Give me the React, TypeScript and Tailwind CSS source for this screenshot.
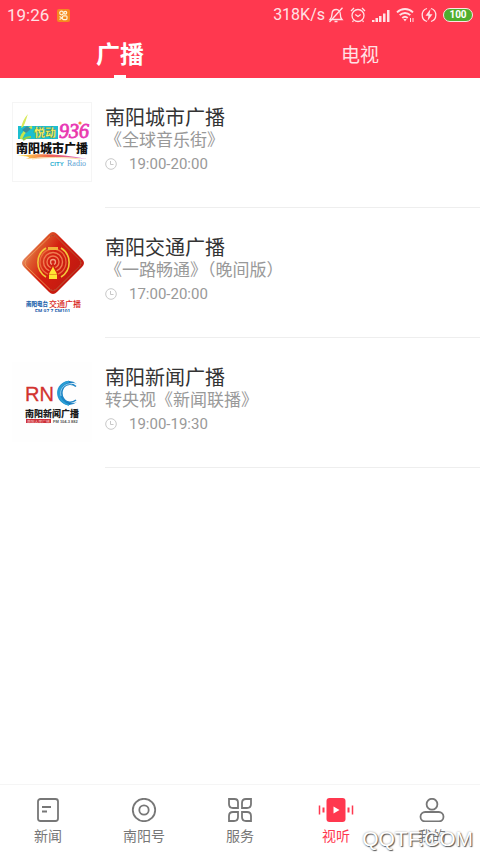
import React from "react";

interface Station {
  name: string;
  show: string;
  time: string;
  logo: React.ReactNode;
}

interface NavItem {
  label: string;
  icon: React.ReactNode;
  active?: boolean;
}

const CityLogo: React.FC = () => (
  <svg viewBox="0 0 80 80" className="w-20 h-20" aria-hidden="true">
    <defs>
      <linearGradient id="swoosh" x1="0" x2="1">
        <stop offset="0" stopColor="#fff04a" />
        <stop offset="0.45" stopColor="#f0624a" />
        <stop offset="1" stopColor="#d05bd8" />
      </linearGradient>
      <linearGradient id="nums" x1="0" y1="0" x2="1" y2="1">
        <stop offset="0" stopColor="#e02fd0" />
        <stop offset="0.6" stopColor="#f0407a" />
        <stop offset="1" stopColor="#e33fe0" />
      </linearGradient>
    </defs>
    <rect x="0.5" y="0.5" width="79" height="79" fill="#fff" stroke="#f5f5f5" />
    <rect x="6" y="24" width="40" height="13" fill="#1cbfd0" />
    <path d="M9 37C11 32 12 30 14 28M9 36C11 31 15 27 20 25" fill="none" stroke="#c8e64a" strokeWidth="2.5" />
    <path d="M9 26C10 21 12 16 16 12C14 17 14 20 11 25Z" fill="#d8ea5a" />
    <path d="M10 28L15 24L19 27L14 31Z" fill="#3a8f9c" />
    <path d="M11 38C14 35 16 35 19 35" fill="none" stroke="#8fd04a" strokeWidth="2" />
    <text x="22" y="35" fontSize="11" fontWeight="900" fill="#fff35c" stroke="#3b7c55" strokeWidth="0.3" fontFamily="'Noto Sans CJK SC', sans-serif">悦动</text>
    <text x="47" y="36" fontSize="20" fontWeight="400" fontStyle="italic" fill="url(#nums)" stroke="#e838b8" strokeWidth="0.8" fontFamily="'Liberation Serif', serif">936</text>
    <circle cx="68" cy="21" r="1.6" fill="#f7923c" />
    <text x="4" y="51" fontSize="12" fontWeight="900" fill="#111" fontFamily="'Noto Sans CJK SC', sans-serif">南阳城市广播</text>
    <path d="M5 54C25 51 52 52 75 57C50 54 30 55 13 57C22 55 14 54 5 54Z" fill="url(#swoosh)" />
    <path d="M20 57C35 55 52 55 68 57" fill="none" stroke="#f7d08c" strokeWidth="0.8" />
    <text x="38" y="64" fontSize="6" fontWeight="700" fill="#2aaed0" fontFamily="'Liberation Sans', sans-serif">CITY</text>
    <text x="55" y="64" fontSize="8" fill="#5ea2d4" fontFamily="'Liberation Serif', serif">Radio</text>
  </svg>
);

const TrafficLogo: React.FC = () => (
  <svg viewBox="0 0 80 80" className="w-20 h-20" aria-hidden="true">
    <defs>
      <linearGradient id="diamond" x1="0" y1="0" x2="0.9" y2="0.5">
        <stop offset="0" stopColor="#f4d0b4" />
        <stop offset="0.35" stopColor="#dd5a2c" />
        <stop offset="0.6" stopColor="#d41f10" />
        <stop offset="1" stopColor="#c41a10" />
      </linearGradient>
    </defs>
    <path d="M37 2Q41 -2 45 2L70 27Q74 31 70 35L45 60Q41 64 37 60L12 35Q8 31 12 27Z" fill="url(#diamond)" />
    <path d="M38 4.500Q41 2 44 4.500L68 28Q70 31 68 34L44 57.500Q41 60 38 57.500L14 34Q12 31 14 28Z" fill="none" stroke="#f0a05a" strokeWidth="0.8" />
    <path d="M38 4.500Q41 2 44 4.500L68 28Q70 31 68 34L44 57.500Q41 60 38 57.500" fill="none" stroke="#8c1410" strokeWidth="0.6" />
    <g fill="none">
      <path d="M34 45A17 17 0 0 1 34 16M49 16A17 17 0 0 1 49 45" stroke="#f2c83a" strokeWidth="1.6" />
      <circle cx="41" cy="30" r="13" stroke="#ec6a3c" strokeWidth="1.3" />
      <circle cx="41" cy="30" r="9.500" stroke="#f07c50" strokeWidth="1.4" />
      <circle cx="41" cy="30" r="6" stroke="#f07c50" strokeWidth="1.4" />
      <circle cx="41" cy="30" r="2.500" stroke="#f2a080" strokeWidth="1.3" />
    </g>
    <rect x="36" y="15" width="10" height="3" fill="#f2b03a" />
    <path d="M34 47L41 30L48 47Z" fill="#cf2212" />
    <path d="M41 34C42 38 45 40 45 43V47H37V43C37 40 40 38 41 34Z" fill="#ffe633" />
    <path d="M37 42.500H45" stroke="#e58a20" strokeWidth="0.8" />
    <text x="14" y="74" fontSize="5.500" fontWeight="900" fill="#1c62ac" fontFamily="'Noto Sans CJK SC', sans-serif">南阳电台</text>
    <text x="37" y="75" fontSize="8" fontWeight="500" fill="#d8281c" fontFamily="'Noto Sans CJK SC', sans-serif">交通广播</text>
    <text x="23" y="81" fontSize="5" fontWeight="700" fill="#1c62ac" fontFamily="'Liberation Sans', sans-serif">FM 97.7 FM101</text>
  </svg>
);

const NewsLogo: React.FC = () => (
  <svg viewBox="0 0 80 80" className="w-20 h-20" aria-hidden="true">
    <defs>
      <linearGradient id="crescent" x1="0" x2="1">
        <stop offset="0" stopColor="#2a9fd6" />
        <stop offset="0.6" stopColor="#1373b8" />
        <stop offset="1" stopColor="#4aa8dc" />
      </linearGradient>
    </defs>
    <rect width="80" height="80" fill="#fefefe" />
    <text x="13" y="39" fontSize="20" fill="#d2322e" stroke="#d2322e" strokeWidth="0.3" fontFamily="'Liberation Sans', sans-serif">RN</text>
    <path d="M65 22A12 12 0 1 0 65 40A10 10 0 1 1 65 22Z" fill="url(#crescent)" />
    <path d="M57 19.500A12 12 0 0 0 57 43" fill="none" stroke="#2a9fd6" strokeWidth="2" />
    <path d="M64 24.500A9 9 0 1 0 64 38" fill="none" stroke="#1d84c6" strokeWidth="1.6" />
    <path d="M60 22A9.500 9.500 0 0 0 49 34" fill="none" stroke="#c8e8f6" strokeWidth="0.7" />
    <text x="13" y="55" fontSize="9" fontWeight="900" fill="#1c1c1c" fontFamily="'Noto Sans CJK SC', sans-serif">南阳新闻广播</text>
    <rect x="14" y="57" width="25" height="4" fill="#cc2f38" />
    <text x="15" y="60.500" fontSize="3.800" fill="#f6c4c4" fontFamily="'Noto Sans CJK SC', sans-serif">南阳人民广播</text>
    <text x="41" y="61" fontSize="4" fontWeight="700" fill="#555" fontFamily="'Liberation Sans', sans-serif">FM 104.3 882</text>
  </svg>
);

const stations: Station[] = [
  { name: "南阳城市广播", show: "《全球音乐街》", time: "19:00-20:00", logo: <CityLogo /> },
  { name: "南阳交通广播", show: "《一路畅通》（晚间版）", time: "17:00-20:00", logo: <TrafficLogo /> },
  { name: "南阳新闻广播", show: "转央视《新闻联播》", time: "19:00-19:30", logo: <NewsLogo /> },
];

const navItems: NavItem[] = [
  {
    label: "新闻",
    icon: (
      <>
        <rect x="8" y="1" width="20" height="22" rx="2.500" />
        <path d="M12 9H21M12 13.500H17" />
      </>
    ),
  },
  {
    label: "南阳号",
    icon: (
      <>
        <circle cx="18" cy="12" r="11.200" />
        <circle cx="18" cy="12" r="4.700" />
      </>
    ),
  },
  {
    label: "服务",
    icon: (
      <>
        <path d="M7 1H12.500Q16 1 16 4.500V10H11Q7 10 7 6Z" />
        <path d="M29 1H24Q20 1 20 5V10H25Q29 10 29 6Z" />
        <path d="M16 14H11Q7 14 7 18V23H12Q16 23 16 19Z" />
        <path d="M20 14H25Q29 14 29 18V23H24Q20 23 20 19Z" />
      </>
    ),
  },
  {
    label: "视听",
    active: true,
    icon: (
      <>
        <rect x="8.500" y="0" width="19" height="24" rx="3" fill="currentColor" stroke="none" />
        <path d="M15.500 8.500V15.500L21.500 12Z" fill="#fff" stroke="none" />
        <path d="M1.500 7.500V16.500M34.500 7.500V16.500" strokeWidth="1.500" />
        <path d="M5.500 9.500V14.500M30.500 9.500V14.500" strokeWidth="2" />
      </>
    ),
  },
  {
    label: "我的",
    icon: (
      <>
        <circle cx="18" cy="6.200" r="5.400" />
        <rect x="6.500" y="14" width="23" height="9.500" rx="4.700" />
      </>
    ),
  },
];

const StatusBar: React.FC = () => (
  <div className="flex items-center justify-between h-[30px] px-[7px] text-[#ffe1e5] font-['Roboto',sans-serif]">
    <div className="flex items-center gap-2">
      <span className="text-[17px] leading-5">19:26</span>
      <svg viewBox="0 0 13 13" className="w-[13px] h-[13px]" aria-hidden="true">
        <rect width="13" height="13" rx="2" fill="#f58a1f" />
        <g fill="none" stroke="#fff3d8" strokeWidth="1.200">
          <circle cx="4.500" cy="4" r="1.800" />
          <circle cx="8.300" cy="3.700" r="1.400" />
          <rect x="5.500" y="6.800" width="4.500" height="3.800" rx="1" />
          <path d="M2.500 7.500L5 9L2.500 10.500" />
        </g>
      </svg>
    </div>
    <div className="flex items-center gap-[6px]">
      <div className="flex items-center gap-[3px]">
        <span className="text-[16px] leading-5">318K/s</span>
        <svg viewBox="0 0 16 16" className="w-4 h-4" fill="none" stroke="currentColor" strokeWidth="1.300" aria-hidden="true">
          <path d="M2 12.500H14C12.500 11 12.300 9.500 12.300 7C12.300 4.500 10.500 2.500 8.300 2.500C5.500 2.500 4 4.500 4 7C4 9.500 3.500 11 2 12.500Z" />
          <path d="M6.500 14.500H9.500M14.500 0.800L1.500 15" />
        </svg>
      </div>
      <svg viewBox="0 0 16 16" className="w-4 h-4" fill="none" stroke="currentColor" strokeWidth="1.300" aria-hidden="true">
        <circle cx="8" cy="8.500" r="6" />
        <path d="M5.300 7.500L8 9.500L10.700 7.500M1 4L4 1M15 4L12 1M3.500 13.500L2.500 15M12.500 13.500L13.500 15" />
      </svg>
      <svg viewBox="0 0 18 13" className="w-[18px] h-[13px]" fill="currentColor" aria-hidden="true">
        <path d="M0 11H2.500V13H0ZM3.500 9H6V13H3.500ZM7 7H9.500V13H7ZM11 4.500H13.500V13H11ZM15 1H17.500V13H15Z" />
      </svg>
      <svg viewBox="0 0 19 16" className="w-[19px] h-4" fill="none" stroke="currentColor" strokeWidth="1.900" aria-hidden="true">
        <path d="M1 5.300C5.500 0.800 12.500 0.800 17 5.300M3.700 8.200C6.700 5.200 11.300 5.200 14.300 8.200M6.300 11C8 9.300 10 9.300 11.700 11" />
        <path d="M7.300 12H10.700L9 14.500Z" fill="currentColor" stroke="none" />
        <path d="M14.500 11V15M17 11V15" strokeWidth="1" />
      </svg>
      <svg viewBox="0 0 16 16" className="w-4 h-4" fill="none" stroke="currentColor" strokeWidth="1.300" aria-hidden="true">
        <path d="M6 1.500A6.800 6.800 0 0 0 6 14.500M10 1.500A6.800 6.800 0 0 1 10 14.500" />
        <path d="M9.500 2L4.500 8.800H7.500L6.500 14L11.500 7.200H8.500Z" fill="currentColor" stroke="none" />
      </svg>
      <span className="flex items-center justify-center w-[30px] h-[14px] rounded-full border border-[#ffe1e5] bg-[#4fae2e] text-white text-[10px] leading-3 font-bold">
        100
      </span>
    </div>
  </div>
);

const StationRow: React.FC<{ station: Station }> = ({ station }) => (
  <li className="flex gap-[13px] pl-3 h-[130px]">
    <div className="shrink-0 pt-6">{station.logo}</div>
    <div className="flex-1 border-b border-[#eee] pt-7">
      <h2 className="text-[20px] leading-[22px] text-[#333]">{station.name}</h2>
      <p className="text-[17px] leading-[22px] text-[#999]">{station.show}</p>
      <p className="flex items-center gap-3 mt-[3px] text-[15px] leading-[22px] text-[#999]">
        <svg viewBox="0 0 12 12" className="w-3 h-3" fill="none" stroke="#c8c8c8" aria-hidden="true">
          <circle cx="6" cy="6" r="5.300" />
          <path d="M5.500 3V6.500H8.500" />
        </svg>
        <span className="font-['Roboto',sans-serif]">{station.time}</span>
      </p>
    </div>
  </li>
);

const App: React.FC = () => {
  return (
    <div className="relative flex flex-col min-h-screen bg-white font-['Noto_Sans_CJK_SC',sans-serif]">
      <header className="bg-[#ff384f]">
        <StatusBar />
        <div className="flex h-12">
          <button className="flex flex-1 flex-col items-center justify-between text-[24px] leading-[45px] font-bold text-white">
            广播
            <span className="w-3 h-[3px] bg-white" />
          </button>
          <button className="flex flex-1 flex-col items-center text-[19px] leading-[48px] text-[#ffe1e5]">电视</button>
        </div>
      </header>

      <main className="flex-1">
        <ul>
          {stations.map((station) => (
            <StationRow key={station.name} station={station} />
          ))}
        </ul>
      </main>

      <nav className="flex h-[69px] border-t border-[#f5f5f5] bg-white">
        {navItems.map((item) => (
          <a
            key={item.label}
            href="#"
            className={`flex flex-1 flex-col items-center gap-[3px] pt-[13px] text-[14px] leading-5 ${
              item.active ? "text-[#ff384f]" : "text-[#777]"
            }`}
          >
            <svg viewBox="0 0 36 24" className="w-9 h-6" fill="none" stroke="currentColor" strokeWidth="1.800" aria-hidden="true">
              {item.icon}
            </svg>
            {item.label}
          </a>
        ))}
      </nav>

      <span className="absolute right-[7px] bottom-0.5 text-[21px] leading-6 text-white font-['Liberation_Sans',sans-serif] [text-shadow:1px_1px_1px_#555,0_0_2px_#999]">
        QQTF.COM
      </span>
    </div>
  );
};

export default App;
